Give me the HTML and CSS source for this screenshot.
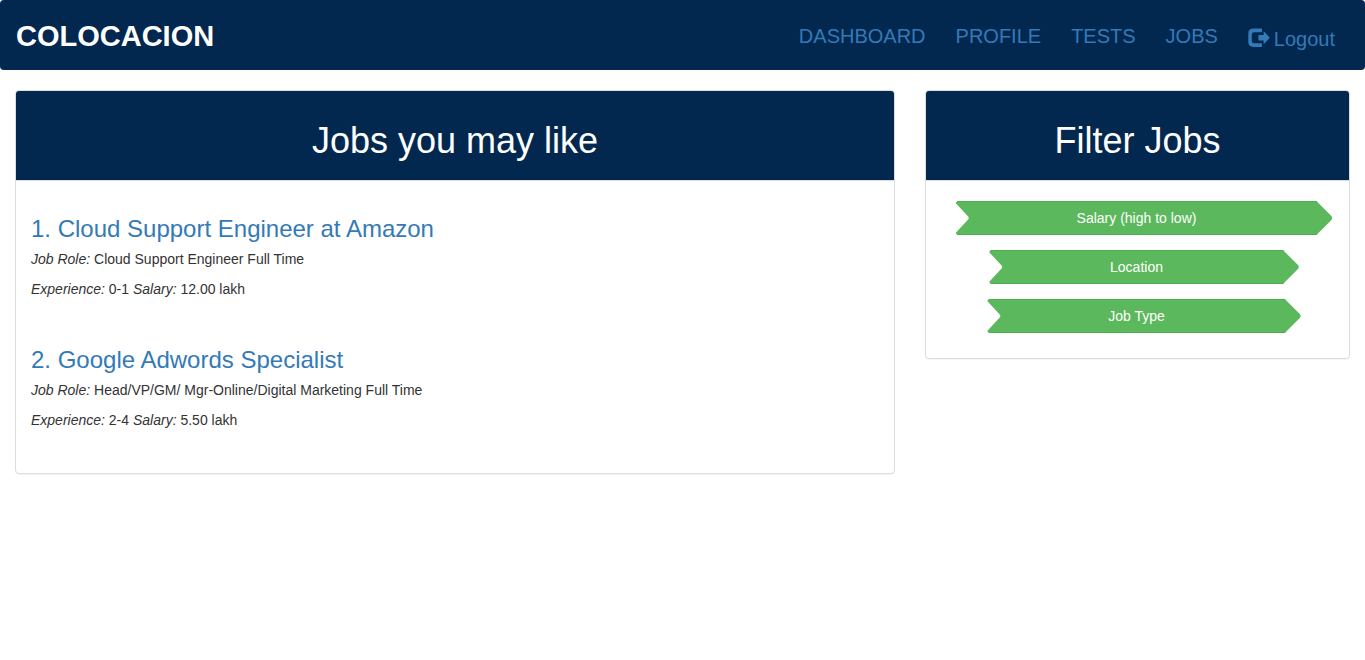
FILE: index.html
```html
<!DOCTYPE html>
<html lang="en">
<head>
<meta charset="utf-8">
<meta name="viewport" content="width=device-width, initial-scale=1">
<title>Colocacion</title>
<link rel="stylesheet" href="styles.css">
</head>
<body>
<header class="navbar">
  <a class="brand" href="#">COLOCACION</a>
  <nav class="menu">
    <a class="menu-link" href="#">DASHBOARD</a>
    <a class="menu-link" href="#">PROFILE</a>
    <a class="menu-link" href="#">TESTS</a>
    <a class="menu-link" href="#">JOBS</a>
    <a class="menu-link logout" href="#">
      <svg class="icon" viewBox="0 0 22 20" aria-hidden="true">
        <path d="M14 1.2V3.6Q14 4.2 13.4 4.2H6.2Q3.8 4.2 3.8 6.4V13Q3.8 15.2 6.2 15.2H13.4Q14 15.2 14 15.8V18.2Q14 18.9 13.4 18.9H5.5Q.3 18.9 .3 14V5.4Q.3 .4 5.5 .4H13.4Q14 .4 14 1.2Z"/>
        <path d="M11 6.9H15.6V4Q15.7 3.3 16.4 3.8L21.3 9.2Q21.7 9.7 21.3 10.2L16.4 15.6Q15.7 16.1 15.6 15.4V12.5H11Q10.4 12.5 10.4 11.9V7.5Q10.4 6.9 11 6.9Z"/>
      </svg>
      <span>Logout</span>
    </a>
  </nav>
</header>
<main class="layout">
  <section class="panel">
    <h1 class="panel-heading">Jobs you may like</h1>
    <div class="job-list">
      <article class="job">
        <h3 class="job-title"><a href="#">1. Cloud Support Engineer at Amazon</a></h3>
        <p><em>Job Role:</em> Cloud Support Engineer Full Time</p>
        <p><em>Experience:</em> 0-1 <em>Salary:</em> 12.00 lakh</p>
      </article>
      <article class="job">
        <h3 class="job-title"><a href="#">2. Google Adwords Specialist</a></h3>
        <p><em>Job Role:</em> Head/VP/GM/ Mgr-Online/Digital Marketing Full Time</p>
        <p><em>Experience:</em> 2-4 <em>Salary:</em> 5.50 lakh</p>
      </article>
    </div>
  </section>
  <aside class="panel">
    <h1 class="panel-heading">Filter Jobs</h1>
    <div class="filters">
      <button class="arrow" type="button">Salary (high to low)</button>
      <button class="arrow" type="button">Location</button>
      <button class="arrow" type="button">Job Type</button>
    </div>
  </aside>
</main>
</body>
</html>
```
FILE: styles.css
```css
* { box-sizing: border-box; }
body {
  margin: 0;
  font: 14px/20px "Liberation Sans", Arial, sans-serif;
  color: #333;
  background: #fff;
}
a { color: #337ab7; text-decoration: none; }
a:hover { text-decoration: underline; }

.navbar {
  display: flex;
  flex-wrap: wrap;
  align-items: center;
  justify-content: space-between;
  min-height: 70px;
  padding: 1px 15px 0 16px;
  background: #022850;
  border-radius: 4px;
}
.brand {
  font-size: 29px;
  line-height: 40px;
  font-weight: bold;
  color: #fff;
}
.menu {
  display: flex;
  flex-wrap: wrap;
  align-items: flex-start;
}
.menu-link {
  padding: 15px 15px 14px;
  font-size: 20px;
  line-height: 40px;
}
.logout {
  display: flex;
  align-items: center;
  gap: 4px;
  padding-top: 18px;
  padding-bottom: 11px;
}
.icon { width: 22px; height: 20px; margin-bottom: 2px; fill: currentColor; }

.layout {
  display: grid;
  grid-template-columns: 2fr 1fr;
  align-items: start;
  padding: 20px 0;
}
.panel {
  margin: 0 15px;
  border: 1px solid #ddd;
  border-radius: 4px;
  box-shadow: 0 1px 1px rgba(0, 0, 0, .05);
}
.panel-heading {
  margin: 0;
  padding: 30px 15px 19px;
  font-size: 36px;
  line-height: 40px;
  font-weight: normal;
  text-align: center;
  color: #fff;
  background: #022850;
  border-bottom: 1px solid #ddd;
  border-radius: 3px 3px 0 0;
}
.job-list {
  display: flex;
  flex-direction: column;
  gap: 48px;
  padding: 35px 15px 43px;
}
.job-title {
  margin: 0 0 7px;
  font-size: 24px;
  line-height: 26px;
  font-weight: normal;
}
.job p { margin: 0; }
.job p + p { margin-top: 10px; }

.filters {
  display: flex;
  flex-direction: column;
  align-items: center;
  gap: 15px;
  padding: 20px 15px 25px 28px;
}
/* Ribbon with a notched tail on the left and a 16px point on the right */
.arrow {
  height: 34px;
  padding: 0 136px 0 121px;
  border: solid #4cae4c;
  border-width: 1px 0;
  font: inherit;
  white-space: nowrap;
  color: #fff;
  background: #5cb85c;
  cursor: pointer;
  clip-path: polygon(0 2px, 2px 0, calc(100% - 16px) 0, calc(100% - 1px) 15px, 100% 17px, calc(100% - 1px) 19px, calc(100% - 16px) 100%, 2px 100%, 0 32px, 13px 18px, 13px 16px);
}

@media (max-width: 991px) {
  .layout { grid-template-columns: 1fr; row-gap: 20px; }
}
```
